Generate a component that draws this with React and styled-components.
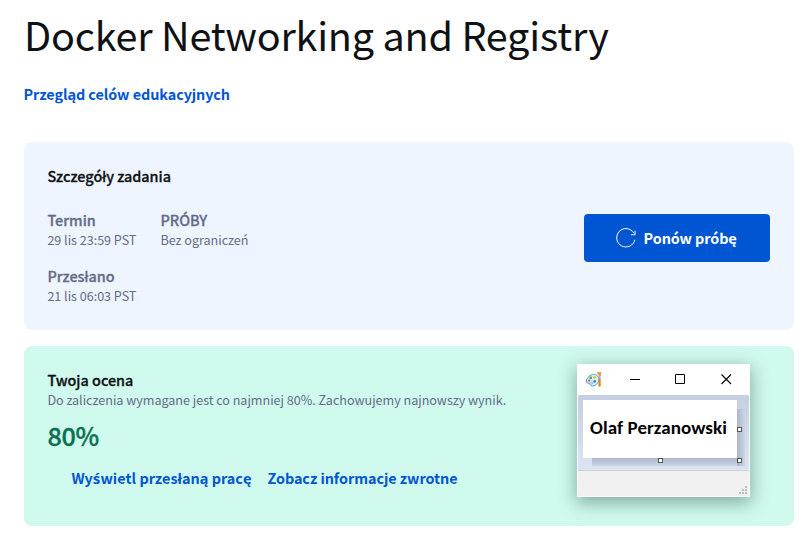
import React from "react";
import styled, { createGlobalStyle } from "styled-components";

const sans = '"Noto Sans CJK SC", "Noto Sans", sans-serif';

const GlobalStyle = createGlobalStyle`
  * { box-sizing: border-box; }
  body {
    margin: 0;
    background: #fff;
    color: #0f1114;
    font-family: ${sans};
    white-space: nowrap;
    overflow: hidden;
  }
  h1, h2, p, dl, dt, dd { margin: 0; }
`;

const Page = styled.main`
  display: flex;
  flex-direction: column;
  align-items: stretch;
  width: 794px;
  padding: 6px 0 18px 24px;
`;

const Title = styled.h1`
  font-size: 39.6px;
  font-weight: 400;
  line-height: 56px;
  letter-spacing: -0.23px;
`;

const Link = styled.a`
  color: #0056d2;
  font-size: 14.4px;
  font-weight: 700;
  line-height: 24px;
  letter-spacing: ${(p) => p.$tracking || "-0.06px"};
  text-decoration: none;
`;

const Objectives = styled.nav`
  display: flex;
  margin: 20px 0 36px -0.5px;
`;

const Accent = styled.span`
  font-family: "Noto Sans", sans-serif;
  font-size: 15px;
`;

const Card = styled.section`
  display: flex;
  justify-content: space-between;
  align-items: flex-start;
  height: ${(p) => p.$height};
  padding: 24px 24px 24px 23.4px;
  border-radius: 8px;
  background: ${(p) => p.$tone};
`;

const DetailsCard = styled(Card)`
  margin-bottom: 16px;
  align-items: center;
`;

const Column = styled.div`
  display: flex;
  flex-direction: column;
`;

const Heading = styled.h2`
  font-size: 14.4px;
  font-weight: 500;
  line-height: 20px;
  -webkit-text-stroke: 0.3px #0f1114;
`;

const Facts = styled.dl`
  display: grid;
  grid-template-columns: 89px auto;
  gap: 16px 24px;
  margin-top: 24px;
`;

const Term = styled.dt`
  color: #636c89;
  font-size: 14.4px;
  font-weight: 500;
  line-height: 20px;
  -webkit-text-stroke: 0.3px #636c89;
`;

const Value = styled.dd`
  color: #636c89;
  font-size: 12.6px;
  line-height: 20px;
  letter-spacing: -0.03px;
`;

const Requirement = styled.p`
  color: #636c89;
  font-size: 12.6px;
  line-height: 20px;
  letter-spacing: -0.03px;
`;

const RetryButton = styled.button`
  display: flex;
  align-items: center;
  justify-content: center;
  gap: 7.4px;
  width: 186px;
  height: 48px;
  margin-top: 4px;
  padding: 0 1px 0 0;
  border: 0;
  border-radius: 4px;
  background: #0056d2;
  color: #fff;
  font: 700 14.4px/24px ${sans};
  letter-spacing: -0.09px;
`;

const Score = styled.p`
  margin: 9px 0 15px;
  color: #087051;
  font-size: 25.2px;
  font-weight: 500;
  line-height: 32px;
  letter-spacing: -0.3px;
  -webkit-text-stroke: 0.35px #087051;
`;

const Actions = styled.div`
  display: flex;
  gap: 16px;
  margin-left: 24px;
`;

const PaintWindow = styled.div`
  display: flex;
  flex-direction: column;
  width: 173px;
  height: 133px;
  margin: -6px 20px 0 0;
  padding: 0 1px 1px;
  background: #fff;
  box-shadow: 0 5px 17px 1px rgba(25, 65, 50, 0.42);
`;

const TitleBar = styled.div`
  display: flex;
  align-items: center;
  height: 31px;
`;

const Workspace = styled.div`
  display: flex;
  position: relative;
  height: 76px;
  padding: 5px;
  border-bottom: 1px solid #ced2d9;
  background: linear-gradient(#c6cfe1, #dbe4f0);
`;

const CanvasShadow = styled.div`
  position: absolute;
  left: 14px;
  top: 14px;
  width: 153px;
  height: 57px;
  background:
    linear-gradient(to bottom, transparent 49px, #abb6cd 49px, #cbd5e5 57px) left / 145px 100% no-repeat,
    linear-gradient(to right, #abb6cd 145px, #cbd5e5 153px);
`;

const Canvas = styled.div`
  position: relative;
  width: 154px;
  height: 58px;
  padding-left: 7px;
  background: #fff;
  color: #000;
  font: 700 19px/56px Carlito, Lato, sans-serif;
  letter-spacing: 0.08px;
`;

const Handle = styled.span`
  position: absolute;
  left: ${(p) => p.$x}px;
  top: ${(p) => p.$y}px;
  width: 5px;
  height: 5px;
  border: 1px solid #555;
  background: #fff;
`;

const StatusBar = styled.div`
  display: flex;
  flex: 1;
  align-items: flex-end;
  justify-content: flex-end;
  padding: 0 2px 2px 0;
  background: #f0f0f0;
`;

function RetryIcon() {
  return (
    <svg width="20" height="20" viewBox="0 0 20 20" fill="none" stroke="#fff" strokeWidth="1">
      <path d="M18.9 11.7A9.2 9.2 0 1 1 17.9 5.2" />
      <path d="M19.1 2.7V6.7H15" />
    </svg>
  );
}

function PaintIcon() {
  return (
    <svg width="18" height="18" viewBox="0 0 18 18">
      <path
        d="M6.2 4C9 2.6 12.8 3.7 13.7 6.6C14.8 10.5 11.7 14.9 7.3 15C5.1 15 5.6 12.7 4.1 12.3C2.5 12.1 1 12.2 1.2 10C1.4 7.5 3.7 5.2 6.2 4Z"
        fill="#dceefa"
        stroke="#579bc5"
      />
      <circle cx="4.2" cy="9.6" r="1.2" fill="#e45c4f" />
      <circle cx="5.8" cy="6.9" r="1.4" fill="#58a84e" />
      <circle cx="9.7" cy="6.3" r="1.4" fill="#e9bc36" />
      <circle cx="9.6" cy="10.4" r="1.4" fill="#338dcc" />
      <circle cx="6.7" cy="12" r="1" fill="#fff" stroke="#579bc5" strokeWidth=".6" />
      <path d="M13.9 7.2L13.2 14.6L14.6 16L15.8 14.7L15.6 7Z" fill="#ed8227" />
      <path d="M14 4.5H15.6V7.5H14Z" fill="#aab6bf" />
      <path d="M11.8 1.2L16.4 1L15.8 4.8H13.6Z" fill="#d89a60" />
    </svg>
  );
}

function WindowControls() {
  return (
    <svg width="145" height="31" viewBox="0 0 145 31" fill="none" stroke="#000">
      <path d="M26 15.5H36M71.5 10.5H80.5V19.5H71.5Z" />
      <path d="M117.5 10.5L127 20M127 10.5L117.5 20" strokeWidth="1.1" />
    </svg>
  );
}

function ResizeGrip() {
  return (
    <svg width="8" height="8" viewBox="0 0 8 8" fill="#bfbfbf">
      <path d="M6 0h2v2H6zM3 3h2v2H3zM6 3h2v2H6zM0 6h2v2H0zM3 6h2v2H3zM6 6h2v2H6z" />
    </svg>
  );
}

const IconSlot = styled.span`
  display: flex;
  flex: none;
  width: 26px;
  padding-left: 7px;
`;

export default function App() {
  return (
    <>
      <GlobalStyle />
      <Page>
        <Title>Docker Networking and Registry</Title>
        <Objectives>
          <Link>Przegląd celów edukacyjnych</Link>
        </Objectives>

        <DetailsCard $height="188px" $tone="#eef5ff">
          <Column>
            <Heading>Szczegóły zadania</Heading>
            <Facts>
              <div>
                <Term>Termin</Term>
                <Value>29 lis 23:59 PST</Value>
              </div>
              <div>
                <Term>PRÓBY</Term>
                <Value>Bez ograniczeń</Value>
              </div>
              <div>
                <Term>Przesłano</Term>
                <Value>21 lis 06:03 PST</Value>
              </div>
            </Facts>
          </Column>
          <RetryButton>
            <RetryIcon />
            Ponów próbę
          </RetryButton>
        </DetailsCard>

        <Card $height="180px" $tone="#d0faed">
          <Column>
            <Heading>Twoja ocena</Heading>
            <Requirement>
              Do zaliczenia wymagane jest co najmniej 80%. Zachowujemy najnowszy wynik.
            </Requirement>
            <Score>80%</Score>
            <Actions>
              <Link $tracking="0.02px">
                Wy<Accent>ś</Accent>wietl przesłaną pracę
              </Link>
              <Link>Zobacz informacje zwrotne</Link>
            </Actions>
          </Column>

          <PaintWindow>
            <TitleBar>
              <IconSlot>
                <PaintIcon />
              </IconSlot>
              <WindowControls />
            </TitleBar>
            <Workspace>
              <CanvasShadow />
              <Canvas>Olaf Perzanowski</Canvas>
              <Handle $x={159} $y={32} />
              <Handle $x={80} $y={63} />
              <Handle $x={159} $y={63} />
            </Workspace>
            <StatusBar>
              <ResizeGrip />
            </StatusBar>
          </PaintWindow>
        </Card>
      </Page>
    </>
  );
}
